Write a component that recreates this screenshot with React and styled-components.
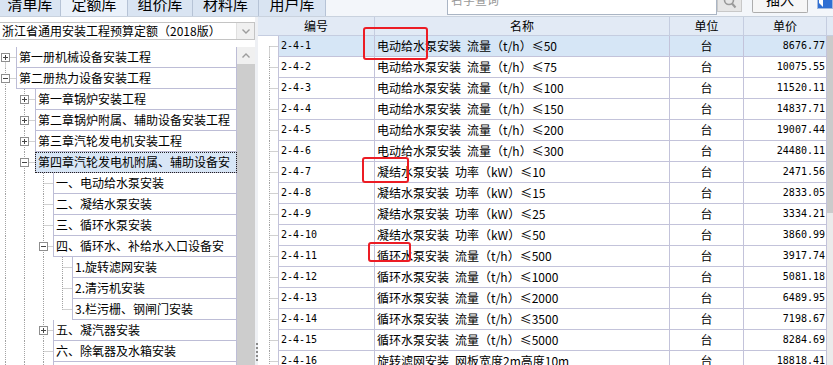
import React from 'react';
import styled, { createGlobalStyle } from 'styled-components';

const GlobalStyle = createGlobalStyle`
  html, body {
    margin: 0;
    padding: 0;
    background: #fff;
    overflow: hidden;
  }
  body {
    font-family: "Noto Sans CJK SC", "Liberation Sans", sans-serif;
    font-size: 12px;
    color: #000;
  }
`;

const Screen = styled.div`
  position: relative;
  width: 833px;
  height: 365px;
  overflow: hidden;
  display: flex;
  flex-direction: column;
  background: #fff;
`;

/* ---------- top bar ---------- */

const TopBar = styled.div`
  height: 17px;
  flex: none;
  box-sizing: border-box;
  display: flex;
  align-items: flex-start;
  background: #f3f6fa;
  border-bottom: 1px solid #c9d2de;
`;

const Tab = styled.div`
  width: ${(p) => p.$w}px;
  height: 16px;
  flex: none;
  box-sizing: border-box;
  display: flex;
  align-items: flex-end;
  justify-content: center;
  overflow: hidden;
  padding-bottom: 5px;
  border-right: 1px solid #b6c3d6;
  background: ${(p) => (p.$active ? '#eaf1fa' : '#d9e4f2')};
  font-size: 15px;
  line-height: 15px;
`;

const Filler = styled.div`
  width: 121px;
  flex: none;
`;

const SearchBox = styled.div`
  width: 270px;
  height: 15px;
  flex: none;
  box-sizing: border-box;
  display: flex;
  align-items: flex-end;
  overflow: hidden;
  padding: 0 0 8px 3px;
  background: #fff;
  border: 1px solid #aab5c4;
  border-top: none;
  color: #9a9a9a;
  line-height: 12px;
`;

const SearchButton = styled.div`
  width: 25px;
  height: 12px;
  flex: none;
  box-sizing: border-box;
  background: #e6e6e6;
  border: 1px solid #c8c8c8;
  border-top: none;
  overflow: hidden;
  svg {
    display: block;
  }
`;

const InsertButton = styled.div`
  width: 56px;
  height: 13px;
  flex: none;
  margin-left: 10px;
  box-sizing: border-box;
  display: flex;
  align-items: flex-end;
  justify-content: center;
  overflow: hidden;
  padding-bottom: 6px;
  background: #f6f6f6;
  border: 1px solid #adadad;
  border-top: none;
  border-radius: 0 0 2px 2px;
  font-size: 14px;
  line-height: 14px;
`;

const CornerIcon = styled.svg`
  flex: none;
  display: block;
  margin-left: 9px;
`;

/* ---------- body ---------- */

const Body = styled.div`
  flex: 1;
  min-height: 0;
  display: flex;
`;

const LeftPanel = styled.div`
  width: 255px;
  flex: none;
  display: flex;
  flex-direction: column;
  background: #fff;
`;

const Dropdown = styled.div`
  height: 18px;
  flex: none;
  margin: 5px 0 7px;
  box-sizing: border-box;
  display: flex;
  border: 1px solid #c4c4c4;
  border-left: none;
`;

const DropdownText = styled.div`
  flex: 1;
  padding-left: 2px;
  line-height: 16px;
  white-space: nowrap;
  overflow: hidden;
`;

const DropdownArrow = styled.div`
  width: 17px;
  flex: none;
  display: flex;
  align-items: center;
  justify-content: center;
  background: #f0f0f0;
  border-left: 1px solid #e0e0e0;
`;

const TreeArea = styled.div`
  flex: 1;
  min-height: 0;
  display: flex;
  overflow: hidden;
`;

const Tree = styled.div`
  width: 237px;
  flex: none;
  display: flex;
  flex-direction: column;
`;

const TreeRow = styled.div`
  height: 21px;
  flex: none;
  display: flex;
`;

const Lines = styled.svg`
  flex: none;
  display: block;
`;

const Label = styled.div`
  flex: 1;
  min-width: 0;
  box-sizing: border-box;
  padding-left: 2px;
  line-height: 20px;
  white-space: nowrap;
  overflow: hidden;
  border-left: 1px solid #bdbdd6;
  border-right: 1px solid #bdbdd6;
  border-bottom: 1px solid #bdbdd6;
  background: ${(p) => (p.$selected ? '#d8e6f6' : '#fff')};
  outline: ${(p) => (p.$selected ? '1px dotted #222' : 'none')};
  outline-offset: -1px;
  box-shadow: ${(p) => (p.$first ? '0 -1px 0 #bdbdd6' : 'none')};
`;

const LeftScroll = styled.div`
  width: 18px;
  flex: none;
  display: flex;
  flex-direction: column;
  background: #cdcdcd;
`;

const ScrollUp = styled.div`
  height: 17px;
  flex: none;
  display: flex;
  align-items: center;
  justify-content: center;
  background: #f0f0f0;
`;

const Splitter = styled.div`
  width: 3px;
  flex: none;
  display: flex;
  flex-direction: column;
  justify-content: flex-end;
  align-items: center;
  background: #eef0f4;
`;

const Grip = styled.div`
  width: 2px;
  height: 20px;
  margin-bottom: 2px;
  background: repeating-linear-gradient(#8a8a8a 0 2px, transparent 2px 4px);
`;

const RightPanel = styled.div`
  flex: 1;
  display: flex;
`;

const Grid = styled.div`
  width: 569px;
  flex: none;
  display: flex;
  flex-direction: column;
`;

const Header = styled.div`
  height: 19px;
  flex: none;
  box-sizing: border-box;
  display: grid;
  grid-template-columns: 117px 295px 74px 83px;
  background: #e2eaf5;
  border-bottom: 1px solid #c5cde0;
`;

const HeadCell = styled.div`
  border-right: 1px solid #c5cde0;
  text-align: center;
  line-height: 18px;
`;

const Row = styled.div`
  height: 21px;
  flex: none;
  display: flex;
`;

const Cells = styled.div`
  flex: none;
  display: grid;
  grid-template-columns: 96px 295px 74px 83px;
  border-left: 1px solid #c3c3da;
  background: ${(p) => (p.$selected ? '#d6e6f6' : '#fff')};
`;

const Cell = styled.div`
  box-sizing: border-box;
  height: 21px;
  padding: ${(p) => (p.$pad ? p.$pad : '0 2px')};
  border-right: 1px solid #c3c3da;
  border-bottom: 1px solid #c3c3da;
  text-align: ${(p) => p.$align || 'left'};
  white-space: nowrap;
  overflow: hidden;
  line-height: 20px;
  font-family: ${(p) =>
    p.$mono ? '"DejaVu Sans Mono", "Liberation Mono", monospace' : 'inherit'};
  font-size: ${(p) => (p.$mono ? '10px' : '12px')};
`;

const RightScroll = styled.div`
  width: 6px;
  flex: none;
  display: flex;
  flex-direction: column;
`;

const ScrollCorner = styled.div`
  height: 19px;
  flex: none;
  box-sizing: border-box;
  background: #e2eaf5;
  border-bottom: 1px solid #c5cde0;
`;

const ScrollThumb = styled.div`
  height: 177px;
  flex: none;
  background: #cbcbcb;
`;

const ScrollTrack = styled.div`
  flex: 1;
  background: #ebebeb;
`;

const Mark = styled.div`
  position: absolute;
  left: ${(p) => p.$x}px;
  top: ${(p) => p.$y}px;
  width: ${(p) => p.$w}px;
  height: ${(p) => p.$h}px;
  box-sizing: border-box;
  border: 2.5px solid #ec1c24;
  border-radius: 3px;
  pointer-events: none;
`;

/* ---------- data ---------- */

const tabs = [
  { label: '清单库', w: 61 },
  { label: '定额库', w: 67, active: true },
  { label: '组价库', w: 65 },
  { label: '材料库', w: 66 },
  { label: '用户库', w: 67 },
];

const LINE_X = [5.5, 24.5, 43.5, 62.5];
const LABEL_X = [16, 35, 53, 72];

const tree = [
  { level: 0, text: '第一册机械设备安装工程', open: false, first: true, cont: [] },
  { level: 0, text: '第二册热力设备安装工程', open: true, cont: [] },
  { level: 1, text: '第一章锅炉安装工程', open: false, cont: [true] },
  { level: 1, text: '第二章锅炉附属、辅助设备安装工程', open: false, cont: [true] },
  { level: 1, text: '第三章汽轮发电机安装工程', open: false, cont: [true] },
  { level: 1, text: '第四章汽轮发电机附属、辅助设备安', open: true, selected: true, cont: [true] },
  { level: 2, text: '一、电动给水泵安装', cont: [true, true] },
  { level: 2, text: '二、凝结水泵安装', cont: [true, true] },
  { level: 2, text: '三、循环水泵安装', cont: [true, true] },
  { level: 2, text: '四、循环水、补给水入口设备安', open: true, cont: [true, true] },
  { level: 3, text: '1.旋转滤网安装', cont: [true, true, true] },
  { level: 3, text: '2.清污机安装', cont: [true, true, true] },
  { level: 3, text: '3.栏污栅、钢闸门安装', last: true, cont: [true, true, true] },
  { level: 2, text: '五、凝汽器安装', open: false, cont: [true, true] },
  { level: 2, text: '六、除氧器及水箱安装', cont: [true, true] },
  { level: 2, text: '七、水处理设备安装', cont: [true, true] },
];

// en space keeps the 6px gap of the original font
const pump = '电动给水泵安装\u2002流量（t/h）≤';
const cond = '凝结水泵安装\u2002功率（kW）≤';
const circ = '循环水泵安装\u2002流量（t/h）≤';

const rows = [
  ['2-4-1', pump + '50', '8676.77'],
  ['2-4-2', pump + '75', '10075.55'],
  ['2-4-3', pump + '100', '11520.11'],
  ['2-4-4', pump + '150', '14837.71'],
  ['2-4-5', pump + '200', '19007.44'],
  ['2-4-6', pump + '300', '24480.11'],
  ['2-4-7', cond + '10', '2471.56'],
  ['2-4-8', cond + '15', '2833.05'],
  ['2-4-9', cond + '25', '3334.21'],
  ['2-4-10', cond + '50', '3860.99'],
  ['2-4-11', circ + '500', '3917.74'],
  ['2-4-12', circ + '1000', '5081.18'],
  ['2-4-13', circ + '2000', '6489.95'],
  ['2-4-14', circ + '3500', '7198.67'],
  ['2-4-15', circ + '5000', '8284.69'],
  ['2-4-16', '旋转滤网安装\u2002网板宽度2m高度10m', '18818.41'],
];

/* ---------- parts ---------- */

function TreeLines({ node }) {
  const { level, open, first, last, cont } = node;
  const cx = LINE_X[level];
  const w = LABEL_X[level];
  return (
    <Lines width={w} height={21}>
      <g stroke="#a3a3a3" strokeDasharray="1 1" strokeWidth="1">
        {cont.map((c, a) =>
          c ? <line key={a} x1={LINE_X[a]} x2={LINE_X[a]} y1={0} y2={21} /> : null
        )}
        <line x1={cx} x2={cx} y1={first ? 10.5 : 0} y2={last ? 10.5 : 21} />
        <line x1={cx} x2={w} y1={10.5} y2={10.5} />
      </g>
      {open !== undefined && (
        <g>
          <rect x={cx - 4} y={6.5} width={8} height={8} fill="#fff" stroke="#8e8e8e" />
          <line x1={cx - 2.5} x2={cx + 2.5} y1={10.5} y2={10.5} stroke="#444" />
          {!open && <line x1={cx} x2={cx} y1={8} y2={13} stroke="#444" />}
        </g>
      )}
    </Lines>
  );
}

function GridLines({ first }) {
  return (
    <Lines width={20} height={21}>
      <g stroke="#a3a3a3" strokeDasharray="1 1">
        <line x1={11.5} x2={11.5} y1={first ? 10.5 : 0} y2={21} />
        <line x1={11.5} x2={20} y1={10.5} y2={10.5} />
      </g>
    </Lines>
  );
}

export default function App() {
  return (
    <Screen>
      <GlobalStyle />
      <TopBar>
        {tabs.map((t) => (
          <Tab key={t.label} $w={t.w} $active={t.active}>
            {t.label}
          </Tab>
        ))}
        <Filler />
        <SearchBox>名字查询</SearchBox>
        <SearchButton>
          <svg width="23" height="11">
            <circle cx="11" cy="0" r="4.5" fill="none" stroke="#9a9a9a" strokeWidth="1.6" />
            <line x1="14" y1="3.5" x2="17.5" y2="7.5" stroke="#9a9a9a" strokeWidth="2" />
          </svg>
        </SearchButton>
        <InsertButton>插入</InsertButton>
        <CornerIcon width="16" height="9">
          <rect x="0.5" y="-1" width="15" height="9.5" fill="#2f6fd3" stroke="#9fb9e0" />
          <polygon points="2,0 6,0 6,7 2,3" fill="#fff" />
        </CornerIcon>
      </TopBar>

      <Body>
        <LeftPanel>
          <Dropdown>
            <DropdownText>浙江省通用安装工程预算定额（2018版）</DropdownText>
            <DropdownArrow>
              <svg width="8" height="5">
                <polyline points="0.5,0.5 4,4 7.5,0.5" fill="none" stroke="#9c9c9c" strokeWidth="1.4" />
              </svg>
            </DropdownArrow>
          </Dropdown>
          <TreeArea>
            <Tree>
              {tree.map((n, i) => (
                <TreeRow key={i}>
                  <TreeLines node={n} />
                  <Label $selected={n.selected} $first={n.first}>
                    {n.text}
                  </Label>
                </TreeRow>
              ))}
            </Tree>
            <LeftScroll>
              <ScrollUp>
                <svg width="8" height="5">
                  <polyline points="0.5,4.5 4,1 7.5,4.5" fill="none" stroke="#9c9c9c" strokeWidth="1.4" />
                </svg>
              </ScrollUp>
            </LeftScroll>
          </TreeArea>
        </LeftPanel>

        <Splitter>
          <Grip />
        </Splitter>

        <RightPanel>
          <Grid>
            <Header>
              <HeadCell>编号</HeadCell>
              <HeadCell>名称</HeadCell>
              <HeadCell>单位</HeadCell>
              <HeadCell>单价</HeadCell>
            </Header>
            {rows.map(([code, name, price], i) => (
              <Row key={code}>
                <GridLines first={i === 0} />
                <Cells $selected={i === 0}>
                  <Cell $mono>{code}</Cell>
                  <Cell>{name}</Cell>
                  <Cell $align="center">台</Cell>
                  <Cell $mono $align="right" $pad="0 1px 0 0">
                    {price}
                  </Cell>
                </Cells>
              </Row>
            ))}
          </Grid>
          <RightScroll>
            <ScrollCorner />
            <ScrollThumb />
            <ScrollTrack />
          </RightScroll>
        </RightPanel>
      </Body>

      <Mark $x={363} $y={27} $w={65} $h={33} />
      <Mark $x={362} $y={157} $w={47} $h={26} />
      <Mark $x={368} $y={242} $w={43} $h={20} />
    </Screen>
  );
}
